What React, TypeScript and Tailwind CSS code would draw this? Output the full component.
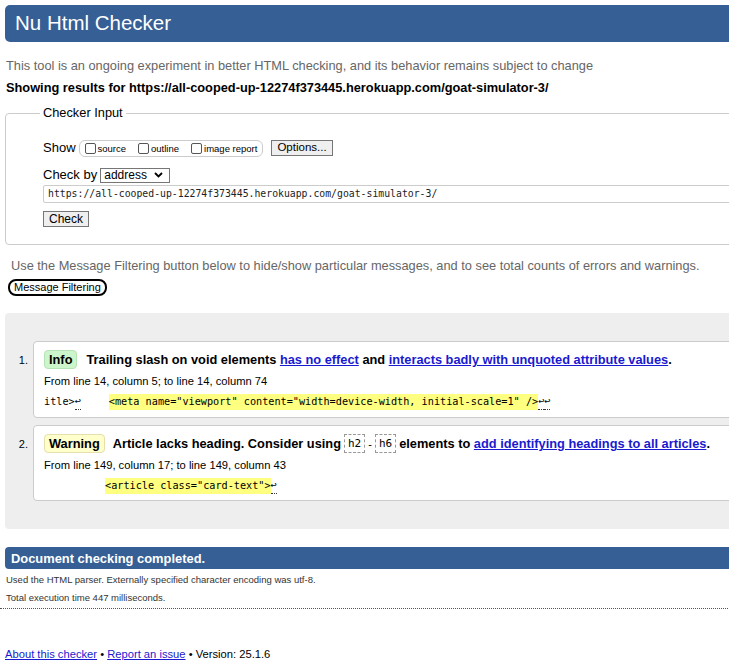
import React from "react";

const Arrow = () => (
  <span className="border-b border-dotted border-[#333] font-['DejaVu_Sans_Mono',monospace]">↩</span>
);

const Code = ({ children }: { children: React.ReactNode }) => (
  <span className="inline-flex items-center h-[19px] px-[3px] border border-dashed border-[#999] font-['DejaVu_Sans_Mono',monospace] font-normal text-[11px]">
    {children}
  </span>
);

const Box = ({ label }: { label: string }) => (
  <span className="flex items-center gap-[2px]">
    <span className="w-[11px] h-[11px] border border-[#555] rounded-[2px] bg-white" />
    <span className="text-[9.5px] mt-[2px]">{label}</span>
  </span>
);

const linkCls = "text-[#1a1ad0] underline";

export default function App() {
  return (
    <div className="w-[729px] h-[670px] overflow-hidden bg-white text-black font-['Liberation_Sans',Arial,sans-serif]">
      <div className="w-[820px] pl-[5px] pt-[5px]">
        {/* Header */}
        <div className="h-[37px] bg-[#365f96] rounded-l-[5px] flex items-center pl-[10px] text-white text-[20.5px]">
          Nu Html Checker
        </div>

        <p className="mt-[15px] ml-[1px] text-[12.8px] leading-[18px] text-[#666]">
          This tool is an ongoing experiment in better HTML checking, and its behavior remains subject to change
        </p>
        <p className="mt-[4px] ml-[1px] text-[12.8px] leading-[18px] font-bold">
          Showing results for https://all-cooped-up-12274f373445.herokuapp.com/goat-simulator-3/
        </p>

        {/* Checker input */}
        <fieldset className="mt-[7px] border border-[#ccc] rounded-[4px] pl-[34px] pb-[17px]">
          <legend className="px-[3px] text-[12.8px] leading-[18px]">Checker Input</legend>
          <div className="ml-[3px] mt-[18px] flex items-center h-[16px] text-[13px]">
            <span>Show</span>
            <div className="ml-[3px] flex items-center gap-[12px] h-[17px] px-[5px] border border-[#ccc] rounded-[6px]">
              <Box label="source" />
              <Box label="outline" />
              <Box label="image report" />
            </div>
            <button className="ml-[8px] h-[16px] px-[5px] border border-[#767676] bg-[#efefef] text-[11.5px] leading-none">
              Options...
            </button>
          </div>
          <div className="ml-[3px] mt-[11px] flex items-center h-[16px] text-[13px]">
            <span>Check by</span>
            <div className="ml-[3px] w-[70px] h-[15px] border border-[#767676] flex items-center justify-between pl-[3px] pr-[6px] text-[12px]">
              <span>address</span>
              <svg width="9" height="6" viewBox="0 0 9 6">
                <path d="M1 1 L4.5 4.5 L8 1" stroke="#000" strokeWidth="1.8" fill="none" />
              </svg>
            </div>
          </div>
          <div className="ml-[3px] mt-[2px] h-[18px] border border-[#ccc] rounded-l-[2px] flex items-center pl-[4px] font-['DejaVu_Sans_Mono',monospace] text-[9.8px] text-[#222]">
            https://all-cooped-up-12274f373445.herokuapp.com/goat-simulator-3/
          </div>
          <button className="ml-[3px] mt-[8px] h-[16px] px-[5px] border border-[#767676] bg-[#efefef] text-[12px] leading-none block">
            Check
          </button>
        </fieldset>

        <p className="mt-[12px] ml-[6px] text-[12.8px] leading-[18px] text-[#666]">
          Use the Message Filtering button below to hide/show particular messages, and to see total counts of errors and warnings.
        </p>
        <button className="mt-[4px] ml-[3px] h-[17px] px-[4px] border-2 border-black rounded-[8px] text-[11px] leading-none block">
          Message Filtering
        </button>

        {/* Results */}
        <div className="mt-[17px] bg-[#eee] rounded-l-[4px] pt-[28px] pb-[28px] flex flex-col gap-[7px]">
          <div className="flex">
            <span className="w-[28px] pt-[11px] pr-[5px] text-right text-[11px]">1.</span>
            <div className="flex-1 bg-white border border-[#ccc] rounded-l-[4px] pl-[10px] pt-[8px] pb-[7px]">
              <div className="flex items-center text-[12.8px] font-bold">
                <span className="h-[19px] px-[4px] flex items-center bg-[#ccf5cc] border border-[#b5e3b5] rounded-[4px]">Info</span>
                <span className="ml-[9px]">
                  Trailing slash on void elements <a className={linkCls}>has no effect</a> and{" "}
                  <a className={linkCls}>interacts badly with unquoted attribute values</a>.
                </span>
              </div>
              <div className="mt-[4px] text-[11.2px] leading-[16px]">From line 14, column 5; to line 14, column 74</div>
              <div className="mt-[4px] flex items-center font-['DejaVu_Sans_Mono',monospace] text-[10.2px] leading-[16px] whitespace-pre">
                <span>itle&gt;</span>
                <Arrow />
                <span className="ml-[28px] bg-[#ffff80]">&lt;meta name="viewport" content="width=device-width, initial-scale=1" /&gt;</span>
                <Arrow />
                <Arrow />
              </div>
            </div>
          </div>

          <div className="flex">
            <span className="w-[28px] pt-[11px] pr-[5px] text-right text-[11px]">2.</span>
            <div className="flex-1 bg-white border border-[#ccc] rounded-l-[4px] pl-[10px] pt-[8px] pb-[6px]">
              <div className="flex items-center text-[12.8px] font-bold">
                <span className="h-[19px] px-[4px] flex items-center bg-[#ffffcc] border border-[#e6deab] rounded-[4px]">Warning</span>
                <span className="ml-[8px] flex items-center gap-[3px]">
                  <span>Article lacks heading. Consider using</span>
                  <Code>h2</Code>
                  <span className="font-normal text-[11px]">-</span>
                  <Code>h6</Code>
                  <span>
                    elements to <a className={linkCls}>add identifying headings to all articles</a>.
                  </span>
                </span>
              </div>
              <div className="mt-[4px] text-[11.2px] leading-[16px]">From line 149, column 17; to line 149, column 43</div>
              <div className="mt-[4px] flex items-center font-['DejaVu_Sans_Mono',monospace] text-[10.2px] leading-[16px] whitespace-pre">
                <span className="ml-[61px] bg-[#ffff80]">&lt;article class="card-text"&gt;</span>
                <Arrow />
              </div>
            </div>
          </div>
        </div>

        {/* Completed */}
        <div className="mt-[18px] h-[22px] bg-[#365f96] rounded-l-[4px] flex items-center pl-[6px] text-white text-[12.9px] font-bold">
          Document checking completed.
        </div>
        <p className="mt-[2px] ml-[1px] text-[9.5px] leading-[18px] text-[#333]">
          Used the HTML parser. Externally specified character encoding was utf-8.
        </p>
        <p className="ml-[1px] text-[9.5px] leading-[18px] text-[#333]">Total execution time 447 milliseconds.</p>
        <div className="-ml-[5px] mt-[1px] border-t border-dotted border-[#555]" />

        <p className="mt-[37px] text-[11.2px] leading-[16px]">
          <a className={linkCls}>About this checker</a> • <a className={linkCls}>Report an issue</a> • Version: 25.1.6
        </p>
      </div>
    </div>
  );
}
